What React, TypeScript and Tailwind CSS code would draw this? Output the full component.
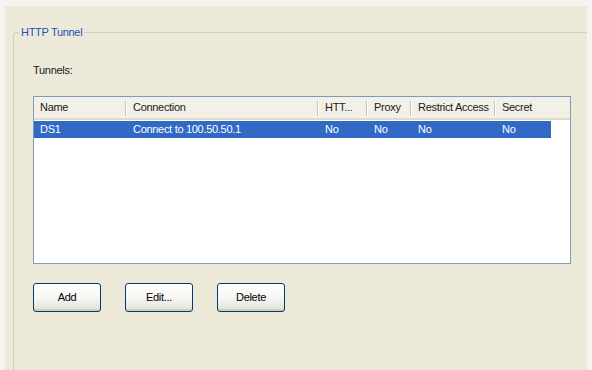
import React from 'react';

interface Column {
  key: string;
  label: string;
  width: string;
}

const columns: Column[] = [
  { key: 'name', label: 'Name', width: 'w-[93px]' },
  { key: 'connection', label: 'Connection', width: 'w-[192px]' },
  { key: 'http', label: 'HTT...', width: 'w-[49px]' },
  { key: 'proxy', label: 'Proxy', width: 'w-[44px]' },
  { key: 'restrict', label: 'Restrict Access', width: 'w-[84px]' },
  { key: 'secret', label: 'Secret', width: 'w-[55px]' },
];

const tunnels = [
  {
    name: 'DS1',
    connection: 'Connect to 100.50.50.1',
    http: 'No',
    proxy: 'No',
    restrict: 'No',
    secret: 'No',
  },
];

const XpButton: React.FC<{ label: string }> = ({ label }) => (
  <button className="w-[68px] h-[29px] rounded-[3px] border border-[#003c74] bg-gradient-to-b from-white via-[#f7f7f4] to-[#e3e1d6] text-[11px] tracking-[-0.3px] text-black shadow-[inset_0_-2px_0_#d6d0c0]">
    {label}
  </button>
);

export default function App() {
  return (
    <div
      className="w-[592px] h-[370px] overflow-hidden bg-[#ece9d8] border-t-[6px] border-l-[5px] border-r-[5px] border-[#f5f4ee] text-[11px] tracking-[-0.3px] text-[#1a1a1a]"
      style={{ fontFamily: '"Liberation Sans", Arial, sans-serif' }}
    >
      <fieldset className="ml-[8px] mr-[1px] mt-[19px] h-[400px] border border-b-0 border-[#d0d0bf] rounded-t-[3px] px-[19px]">
        <legend className="ml-[-14px] px-[2px] text-[11px] leading-[15px] text-[#1f4fb8]">HTTP Tunnel</legend>

        <div className="mt-[23px] leading-[15px]">Tunnels:</div>

        {/* list view */}
        <div className="mt-[18px] w-[538px] h-[168px] border border-[#7f9db9] bg-white">
          <div className="flex h-[23px] bg-[#f3f1e7] border-b-2 border-[#dedbc9]">
            {columns.map((col, i) => (
              <div key={col.key} className={`${col.width} flex items-center relative pl-[6px] whitespace-nowrap`}>
                {col.label}
                {i < columns.length - 1 && (
                  <span className="absolute right-0 top-[4px] h-[15px] w-[2px] border-l border-[#c7c5b2] border-r border-r-white" />
                )}
              </div>
            ))}
          </div>
          {tunnels.map(t => (
            <div key={t.name} className="flex w-[517px] h-[17px] mt-[1px] bg-[#316ac5] text-white">
              {columns.map(col => (
                <div key={col.key} className={`${col.width} flex items-center pl-[6px] whitespace-nowrap`}>
                  {t[col.key as keyof typeof t]}
                </div>
              ))}
            </div>
          ))}
        </div>

        <div className="mt-[19px] flex gap-[24px]">
          <XpButton label="Add" />
          <XpButton label="Edit..." />
          <XpButton label="Delete" />
        </div>
      </fieldset>
    </div>
  );
}
